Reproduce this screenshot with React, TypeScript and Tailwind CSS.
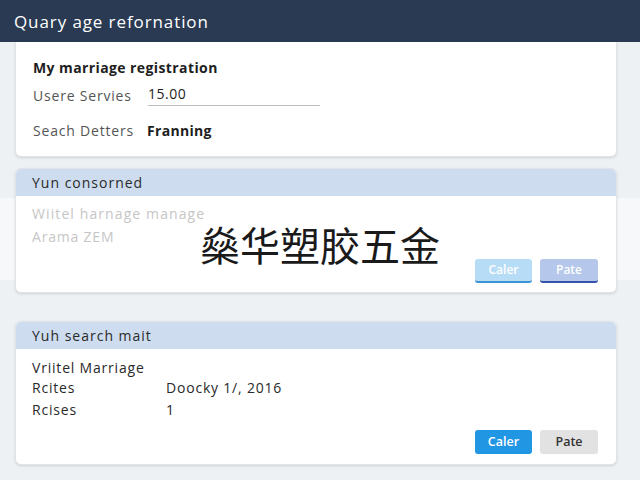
import React from "react";

const font = { fontFamily: '"Open Sans", "Noto Sans", sans-serif' };

export default function App() {
  return (
    <div className="relative w-[640px] h-[480px] overflow-hidden bg-[#eef1f4]" style={font}>
      <div className="h-[42px] bg-[#293a52] flex items-center px-[14px]">
        <span className="text-white text-[17px] tracking-[0.9px] leading-none">Quary age refornation</span>
      </div>

      <div className="relative flex flex-col pl-[15px] pr-[23px]">
        {/* light band behind card 2 */}
        <div className="absolute left-0 right-0 top-[156px] h-[82px] bg-[#f6f8fa]" />

        {/* Card 1 */}
        <div className="relative h-[115px] bg-white rounded-b-md border border-t-0 border-[#e1e5ea] shadow-sm pl-[17px] pt-[17px]">
          <div className="text-[14px] tracking-[0.4px] font-bold text-[#1e1e1e] leading-[18px]">My marriage registration</div>
          <div className="flex items-end mt-[7px] h-[22px]">
            <span className="w-[115px] pb-[1px] text-[14px] tracking-[0.8px] text-[#555] leading-[18px]">Usere Servies</span>
            <div className="w-[172px] border-b border-[#bdbdbd]">
              <span className="text-[14px] tracking-[0.5px] text-[#1e1e1e] leading-[18px]">15.00</span>
            </div>
          </div>
          <div className="flex items-center mt-[16px]">
            <span className="w-[114px] text-[14px] tracking-[0.8px] text-[#555] leading-[18px]">Seach Detters</span>
            <span className="text-[14px] tracking-[0.3px] font-bold text-[#1e1e1e] leading-[18px]">Franning</span>
          </div>
        </div>

        {/* Card 2 */}
        <div className="relative mt-[11px] h-[125px] bg-white rounded-md border border-[#e1e5ea] shadow-sm overflow-hidden flex flex-col">
          <div className="h-[27px] bg-[#cddcee] flex items-center pl-[16px]">
            <span className="text-[14px] tracking-[1px] text-[#2a2a2a]">Yun consorned</span>
          </div>
          <div className="flex-1 flex flex-col pl-[16px] pr-[18px]">
            <div className="mt-[9px] text-[14px] tracking-[1.1px] text-[#c6c6c6] leading-[18px]">Wiitel harnage manage</div>
            <div className="mt-[5px] text-[14px] tracking-[0.8px] text-[#c6c6c6] leading-[18px]">Arama ZEM</div>
            <div className="mt-auto mb-[9px] flex justify-end gap-[8px]">
              <div className="w-[57px] h-[24px] rounded-[3px] bg-[#b7dcf5] border-b-2 border-[#3d93d6] flex items-center justify-center text-[12px] text-white font-semibold">Caler</div>
              <div className="w-[58px] h-[24px] rounded-[3px] bg-[#b5c7ea] border-b-2 border-[#3453a8] flex items-center justify-center text-[12px] text-white font-semibold">Pate</div>
            </div>
          </div>
        </div>

        {/* Card 3 */}
        <div className="relative mt-[28px] h-[144px] bg-white rounded-md border border-[#e1e5ea] shadow-sm overflow-hidden flex flex-col">
          <div className="h-[27px] bg-[#cddcee] flex items-center pl-[16px]">
            <span className="text-[14px] tracking-[1px] text-[#2a2a2a]">Yuh search mait</span>
          </div>
          <div className="flex-1 flex flex-col pl-[16px] pr-[18px]">
            <div className="mt-[10px] text-[14px] tracking-[0.8px] text-[#2a2a2a] leading-[18px]">Vriitel Marriage</div>
            <div className="mt-[2px] flex text-[14px] tracking-[0.8px] text-[#2a2a2a] leading-[18px]">
              <span className="w-[134px]">Rcites</span>
              <span>Doocky 1/, 2016</span>
            </div>
            <div className="mt-[4px] flex text-[14px] tracking-[0.8px] text-[#2a2a2a] leading-[18px]">
              <span className="w-[134px]">Rcises</span>
              <span>1</span>
            </div>
            <div className="mt-auto mb-[10px] flex justify-end gap-[8px]">
              <div className="w-[57px] h-[24px] rounded-[3px] bg-[#2196e3] flex items-center justify-center text-[12.5px] text-white font-semibold">Caler</div>
              <div className="w-[58px] h-[24px] rounded-[3px] bg-[#e2e2e2] flex items-center justify-center text-[12.5px] text-[#333] font-semibold">Pate</div>
            </div>
          </div>
        </div>
      </div>

      <div
        className="absolute left-[200px] top-[221px] text-[40px] leading-[46px] text-[#1a1a1a] whitespace-nowrap"
        style={{ fontFamily: '"Noto Sans CJK SC", sans-serif' }}
      >
        燊华塑胶五金
      </div>
    </div>
  );
}
